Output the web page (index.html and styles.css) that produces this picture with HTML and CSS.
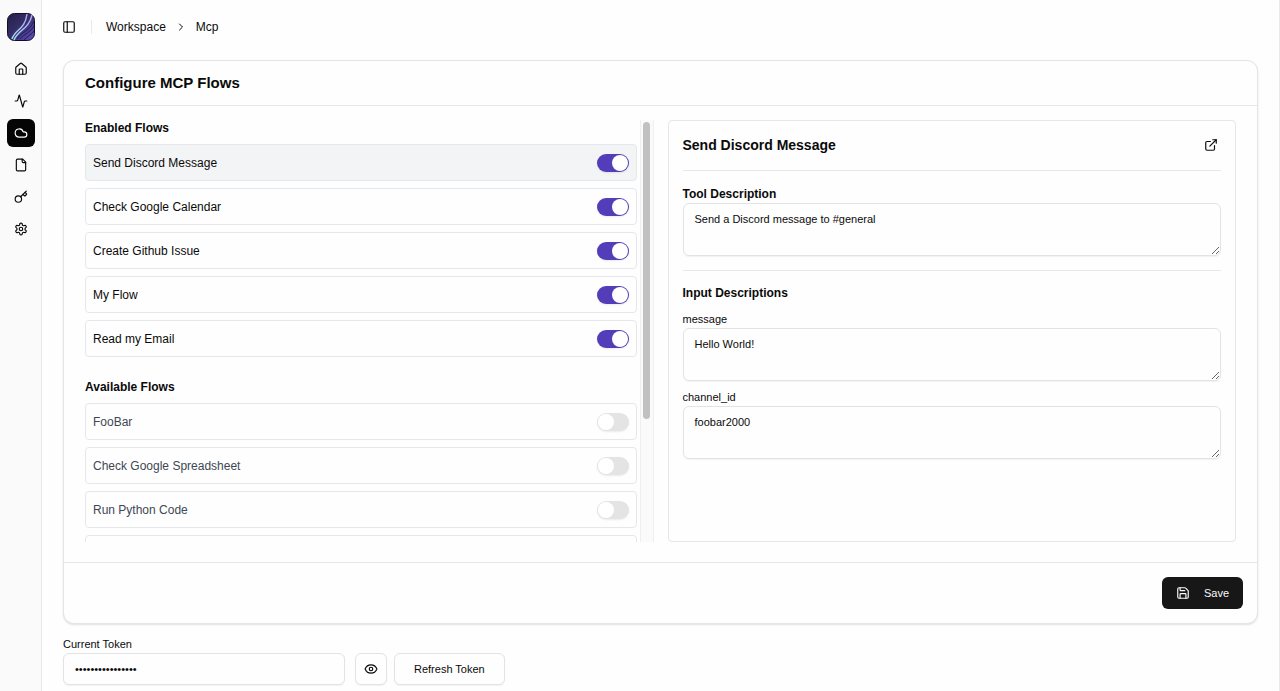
FILE: index.html
```html
<!DOCTYPE html>
<html lang="en">
<head>
    <meta charset="UTF-8">
    <meta name="viewport" content="width=device-width, initial-scale=1.0">
    <title>Configure MCP Flows</title>
    <link rel="stylesheet" href="styles.css">
</head>
<body>
    <nav class="sidebar" aria-label="Main">
        <a class="logo" href="#" aria-label="Start">
            <svg viewBox="0 0 28 28">
                <defs>
                    <linearGradient id="logo-bg" x1="0" y1="0" x2="1" y2="1">
                        <stop offset="0" stop-color="#232046"/>
                        <stop offset="0.5" stop-color="#37306c"/>
                        <stop offset="1" stop-color="#6450c4"/>
                    </linearGradient>
                    <linearGradient id="logo-line" x1="0" y1="1" x2="1" y2="0">
                        <stop offset="0" stop-color="#a5e3ee"/>
                        <stop offset="1" stop-color="#b3a8ee"/>
                    </linearGradient>
                </defs>
                <rect x="0.5" y="0.5" width="27" height="27" rx="7" fill="url(#logo-bg)" stroke="#100e24"/>
                <g fill="none" stroke="#241d55" stroke-width="1">
                    <path d="M10 26C14 19 23 18 27 8"/>
                    <path d="M13 26C17 21 24 19 27 13"/>
                    <path d="M17 27C21 23 25 21 27 18"/>
                </g>
                <g fill="none" stroke="url(#logo-line)" stroke-width="1.4">
                    <path d="M5 26C8 16 18 17 20 1"/>
                    <path d="M7 27C11 17 22 16 25 2"/>
                </g>
            </svg>
        </a>
        <a class="nav-link" href="#" aria-label="Home">
            <svg class="icon" viewBox="0 0 24 24"><path d="M15 21v-8a1 1 0 0 0-1-1h-4a1 1 0 0 0-1 1v8"/><path d="M3 10a2 2 0 0 1 .709-1.528l7-5.999a2 2 0 0 1 2.582 0l7 5.999A2 2 0 0 1 21 10v9a2 2 0 0 1-2 2H5a2 2 0 0 1-2-2z"/></svg>
        </a>
        <a class="nav-link" href="#" aria-label="Activity">
            <svg class="icon" viewBox="0 0 24 24"><path d="M22 12h-2.48a2 2 0 0 0-1.93 1.46l-2.35 8.36a.25.25 0 0 1-.48 0L9.24 2.18a.25.25 0 0 0-.48 0l-2.35 8.36A2 2 0 0 1 4.49 12H2"/></svg>
        </a>
        <a class="nav-link active" href="#" aria-label="Mcp">
            <svg class="icon" viewBox="0 0 24 24"><path d="M17.5 19H9a7 7 0 1 1 6.71-9h1.79a4.5 4.5 0 1 1 0 9Z"/></svg>
        </a>
        <a class="nav-link" href="#" aria-label="Files">
            <svg class="icon" viewBox="0 0 24 24"><path d="M15 2H6a2 2 0 0 0-2 2v16a2 2 0 0 0 2 2h12a2 2 0 0 0 2-2V7Z"/><path d="M14 2v4a2 2 0 0 0 2 2h4"/></svg>
        </a>
        <a class="nav-link" href="#" aria-label="Secrets">
            <svg class="icon" viewBox="0 0 24 24"><path d="m15.5 7.5 2.3 2.3a1 1 0 0 0 1.4 0l2.1-2.1a1 1 0 0 0 0-1.4L19 4"/><path d="m21 2-9.6 9.6"/><circle cx="7.5" cy="15.5" r="5.5"/></svg>
        </a>
        <a class="nav-link" href="#" aria-label="Settings">
            <svg class="icon" viewBox="0 0 24 24"><path d="M12.22 2h-.44a2 2 0 0 0-2 2v.18a2 2 0 0 1-1 1.73l-.43.25a2 2 0 0 1-2 0l-.15-.08a2 2 0 0 0-2.73.73l-.22.38a2 2 0 0 0 .73 2.73l.15.1a2 2 0 0 1 1 1.72v.51a2 2 0 0 1-1 1.74l-.15.09a2 2 0 0 0-.73 2.73l.22.38a2 2 0 0 0 2.73.73l.15-.08a2 2 0 0 1 2 0l.43.25a2 2 0 0 1 1 1.73V20a2 2 0 0 0 2 2h.44a2 2 0 0 0 2-2v-.18a2 2 0 0 1 1-1.73l.43-.25a2 2 0 0 1 2 0l.15.08a2 2 0 0 0 2.73-.73l.22-.39a2 2 0 0 0-.73-2.73l-.15-.08a2 2 0 0 1-1-1.74v-.5a2 2 0 0 1 1-1.74l.15-.09a2 2 0 0 0 .73-2.73l-.22-.38a2 2 0 0 0-2.73-.73l-.15.08a2 2 0 0 1-2 0l-.43-.25a2 2 0 0 1-1-1.73V4a2 2 0 0 0-2-2z"/><circle cx="12" cy="12" r="3"/></svg>
        </a>
    </nav>

    <main class="content">
        <header class="topbar">
            <button class="panel-button" type="button" aria-label="Toggle sidebar">
                <svg class="icon" viewBox="0 0 24 24"><rect width="18" height="18" x="3" y="3" rx="2"/><path d="M9 3v18"/></svg>
            </button>
            <span class="separator"></span>
            <a href="#">Workspace</a>
            <svg class="icon chevron" viewBox="0 0 24 24"><path d="m9 18 6-6-6-6"/></svg>
            <a href="#">Mcp</a>
        </header>

        <section class="card">
            <h1>Configure MCP Flows</h1>
            <div class="card-body">
                <div class="flows">
                    <div class="flows-scroll">
                        <h2>Enabled Flows</h2>
                        <div class="flow-list">
                            <label class="flow selected">Send Discord Message <input type="checkbox" class="switch" checked></label>
                            <label class="flow">Check Google Calendar <input type="checkbox" class="switch" checked></label>
                            <label class="flow">Create Github Issue <input type="checkbox" class="switch" checked></label>
                            <label class="flow">My Flow <input type="checkbox" class="switch" checked></label>
                            <label class="flow">Read my Email <input type="checkbox" class="switch" checked></label>
                        </div>
                        <h2>Available Flows</h2>
                        <div class="flow-list available">
                            <label class="flow">FooBar <input type="checkbox" class="switch"></label>
                            <label class="flow">Check Google Spreadsheet <input type="checkbox" class="switch"></label>
                            <label class="flow">Run Python Code <input type="checkbox" class="switch"></label>
                            <div class="flow"></div>
                        </div>
                    </div>
                    <div class="scrollbar"><div class="thumb"></div></div>
                </div>

                <div class="details">
                    <div class="details-head">
                        <h2>Send Discord Message</h2>
                        <a href="#" aria-label="Open flow">
                            <svg class="icon" viewBox="0 0 24 24"><path d="M15 3h6v6"/><path d="M10 14 21 3"/><path d="M18 13v6a2 2 0 0 1-2 2H5a2 2 0 0 1-2-2V8a2 2 0 0 1 2-2h6"/></svg>
                        </a>
                    </div>
                    <div class="field tool-field">
                        <label class="strong" for="tool-description">Tool Description</label>
                        <textarea id="tool-description">Send a Discord message to #general</textarea>
                    </div>
                    <h3>Input Descriptions</h3>
                    <div class="field">
                        <label for="message">message</label>
                        <textarea id="message">Hello World!</textarea>
                    </div>
                    <div class="field">
                        <label for="channel-id">channel_id</label>
                        <textarea id="channel-id">foobar2000</textarea>
                    </div>
                </div>
            </div>
            <div class="card-footer">
                <button class="save" type="button">
                    <svg class="icon" viewBox="0 0 24 24"><path d="M15.2 3a2 2 0 0 1 1.4.6l3.8 3.8a2 2 0 0 1 .6 1.4V19a2 2 0 0 1-2 2H5a2 2 0 0 1-2-2V5a2 2 0 0 1 2-2z"/><path d="M17 21v-7a1 1 0 0 0-1-1H8a1 1 0 0 0-1 1v7"/><path d="M7 3v4a1 1 0 0 0 1 1h7"/></svg>
                    Save
                </button>
            </div>
        </section>

        <label class="token-label" for="token">Current Token</label>
        <div class="token-row">
            <input class="token-input" id="token" type="text" value="••••••••••••••••" readonly>
            <button class="outline square" type="button" aria-label="Show token">
                <svg class="icon" viewBox="0 0 24 24"><path d="M2.062 12.348a1 1 0 0 1 0-.696 10.75 10.75 0 0 1 19.876 0 1 1 0 0 1 0 .696 10.75 10.75 0 0 1-19.876 0"/><circle cx="12" cy="12" r="3"/></svg>
            </button>
            <button class="outline" type="button">Refresh Token</button>
        </div>
    </main>
</body>
</html>
```
FILE: styles.css
```css
* {
    box-sizing: border-box;
}
body {
    margin: 0;
    display: flex;
    min-height: 100vh;
    font-family: "Liberation Sans", Arial, sans-serif;
    font-size: 12px;
    line-height: 18px;
    color: #0a0a0a;
    background: #fefefe;
}
h1, h2, h3 {
    margin: 0;
    font-size: 12px;
    line-height: 17px;
    font-weight: 700;
}
a {
    color: inherit;
    text-decoration: none;
}
button, input, textarea {
    font-family: inherit;
    font-size: 11px;
    color: inherit;
}
button {
    cursor: pointer;
}
.icon {
    display: block;
    width: 14px;
    height: 14px;
    fill: none;
    stroke: currentColor;
    stroke-width: 2;
    stroke-linecap: round;
    stroke-linejoin: round;
}

/* sidebar */
.sidebar {
    flex: none;
    width: 42px;
    padding: 13px 7px;
    display: flex;
    flex-direction: column;
    gap: 4px;
    background: #fafafa;
    border-right: 1px solid #e9e9ea;
}
.logo {
    height: 28px;
    margin-bottom: 10px;
}
.logo svg {
    display: block;
    width: 28px;
    height: 28px;
}
.nav-link {
    width: 28px;
    height: 28px;
    display: flex;
    align-items: center;
    justify-content: center;
    border-radius: 6px;
}
.nav-link.active {
    background: #050505;
    color: white;
}

/* content */
.content {
    flex: 1;
    min-width: 0;
    padding: 0 21px 6px;
    border-right: 1px solid #e9e9ea;
}
.topbar {
    height: 54px;
    display: flex;
    align-items: center;
}
.panel-button {
    padding: 0;
    margin-left: -1px;
    border: none;
    background: none;
}
.separator {
    width: 1px;
    height: 14px;
    margin: 0 14px 0 15px;
    background: #e9e9ea;
}
.chevron {
    width: 12px;
    height: 12px;
    margin: 0 9px;
}

/* card */
.card {
    margin-top: 6px;
    background: #fefefe;
    border: 1px solid #e5e5e7;
    border-radius: 11px;
    box-shadow: 0 1px 2px rgba(0, 0, 0, 0.12);
}
.card h1 {
    padding: 12px 21px;
    font-size: 15px;
    line-height: 20px;
    border-bottom: 1px solid #e7e7e9;
}
.card-body {
    display: grid;
    grid-template-columns: 1fr 1fr;
    gap: 14px;
    padding: 14px 21px 20px;
}
.card-footer {
    display: flex;
    justify-content: flex-end;
    padding: 14px;
    border-top: 1px solid #e7e7e9;
}

/* flow list */
.flows {
    display: flex;
    gap: 3px;
    height: 422px;
}
.flows-scroll {
    flex: 1;
    overflow-y: auto;
    scrollbar-width: none;
}
.scrollbar {
    width: 14px;
    padding: 2px;
    background: #fafafa;
    border: solid #efefef;
    border-width: 0 1px;
}
.thumb {
    width: 7px;
    height: 71%;
    margin: 0 auto;
    border-radius: 4px;
    background: #c1c1c1;
}
.flow-list {
    display: flex;
    flex-direction: column;
    gap: 7px;
    margin: 7px 0 22px;
}
.flow-list.available {
    margin-bottom: 0;
    color: #3f4754;
}
.flow {
    height: 37px;
    padding: 0 7px;
    display: flex;
    align-items: center;
    justify-content: space-between;
    border: 1px solid #e5e7eb;
    border-radius: 4px;
}
.flow.selected {
    background: #f3f4f6;
}
.switch {
    appearance: none;
    width: 32px;
    height: 18px;
    margin: 0;
    padding: 1px;
    border-radius: 9px;
    background: #e4e4e5;
    box-shadow: 0 1px 2px rgba(0, 0, 0, 0.08);
    cursor: pointer;
}
.switch::before {
    content: "";
    display: block;
    width: 16px;
    height: 16px;
    border-radius: 50%;
    background: white;
}
.switch:checked {
    background: #533db8;
}
.switch:checked::before {
    margin-left: 14px;
}

/* flow details */
.details {
    min-width: 0;
    padding: 14px;
    border: 1px solid #e5e7eb;
    border-radius: 4px;
}
.details-head {
    display: flex;
    align-items: center;
    justify-content: space-between;
    padding-bottom: 15px;
    margin-bottom: 14px;
    border-bottom: 1px solid #e7e7e9;
}
.details-head h2 {
    font-size: 14px;
    line-height: 20px;
}
.details-head a {
    margin-right: 3px;
}
.details h3 {
    margin-bottom: 8px;
}
.field {
    margin-bottom: 7px;
    font-size: 11px;
}
.tool-field {
    padding-bottom: 14px;
    margin-bottom: 14px;
    border-bottom: 1px solid #e7e7e9;
}
.field label {
    display: block;
}
.field .strong {
    font-size: 12px;
    font-weight: 700;
}
.field textarea {
    display: block;
    width: 100%;
    height: 53px;
    padding: 6px 11px;
    line-height: 18px;
    border: 1px solid #e3e3e5;
    border-radius: 6px;
    background: transparent;
    box-shadow: 0 1px 1px rgba(0, 0, 0, 0.05);
    resize: vertical;
}

/* buttons and token */
.save {
    height: 32px;
    padding: 0 14px;
    display: flex;
    align-items: center;
    gap: 14px;
    border: none;
    border-radius: 6px;
    background: #171717;
    color: #fafafa;
}
.token-label {
    display: block;
    margin-top: 11px;
    font-size: 11px;
}
.token-row {
    display: flex;
}
.token-input {
    width: 282px;
    height: 32px;
    margin-right: 10px;
    padding: 0 11px;
}
.token-input,
.outline {
    border: 1px solid #e3e3e5;
    border-radius: 6px;
    background: #fefefe;
    box-shadow: 0 1px 1px rgba(0, 0, 0, 0.05);
}
.outline {
    height: 32px;
    padding: 0 19px;
}
.outline.square {
    width: 32px;
    padding: 0 8px;
    margin-right: 7px;
}
```
